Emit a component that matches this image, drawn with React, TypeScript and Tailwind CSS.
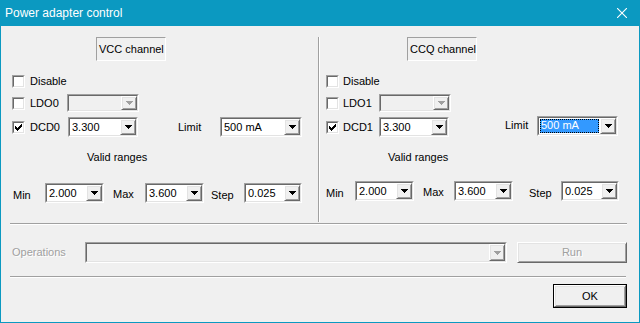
import React from "react";

const sunkenOuter = "border border-t-[#a0a0a0] border-l-[#a0a0a0] border-r-white border-b-white";
const sunkenInner = "border border-t-[#696969] border-l-[#696969] border-r-[#e3e3e3] border-b-[#e3e3e3]";
const raised =
  "border border-t-white border-l-white border-r-[#696969] border-b-[#696969] shadow-[inset_1px_1px_#e3e3e3,inset_-1px_-1px_#a0a0a0]";

function Arrow({ disabled }: { disabled?: boolean }) {
  return (
    <svg width="7" height="4" viewBox="0 0 7 4" shapeRendering="crispEdges">
      <path d="M0 0h7v1H0z M1 1h5v1H1z M2 2h3v1H2z M3 3h1v1H3z" fill={disabled ? "#a0a0a0" : "#000"} />
    </svg>
  );
}

function Combo({
  size,
  value = "",
  disabled = false,
  selected = false,
}: {
  size: string;
  value?: string;
  disabled?: boolean;
  selected?: boolean;
}) {
  return (
    <div className={`flex shrink-0 ${sunkenOuter} ${size}`}>
      <div className={`flex flex-1 ${sunkenInner} ${disabled ? "bg-[#f0f0f0]" : "bg-white"}`}>
        <div className="flex flex-1 items-stretch p-[1px]">
          {selected ? (
            <div className="flex flex-1 items-center bg-[#3399ff] pl-[1px] text-white outline-1 outline-dotted outline-[#000] -outline-offset-1">
              {value}
            </div>
          ) : (
            <div className="flex flex-1 items-center pl-[1px]">{value}</div>
          )}
        </div>
        <div className={`flex w-[16px] items-center justify-center bg-[#f0f0f0] ${raised}`}>
          <Arrow disabled={disabled} />
        </div>
      </div>
    </div>
  );
}

function Check({ checked = false }: { checked?: boolean }) {
  return (
    <div className={`flex h-[13px] w-[13px] shrink-0 ${sunkenOuter}`}>
      <div className={`flex flex-1 items-center justify-center bg-white ${sunkenInner}`}>
        {checked && (
          <svg width="7" height="7" viewBox="0 0 7 7" shapeRendering="crispEdges">
            <path
              d="M6 0h1v1H6z M5 1h2v1H5z M0 2h1v1H0z M4 2h3v1H4z M0 3h2v1H0z M3 3h3v1H3z M0 4h5v1H0z M1 5h3v1H1z M2 6h1v1H2z"
              fill="#000"
            />
          </svg>
        )}
      </div>
    </div>
  );
}

function Channel({ side }: { side: "left" | "right" }) {
  const L = side === "left";
  const n = L ? "0" : "1";
  return (
    <div className={`flex flex-col ${L ? "w-[317px]" : "flex-1"}`}>
      <div
        className={`mt-[11px] flex h-[24px] w-[70px] items-center whitespace-nowrap pl-[2px] ${sunkenOuter} ${L ? "ml-[95px]" : "ml-[87px]"}`}
      >
        {L ? "VCC channel" : "CCQ channel"}
      </div>

      <div className={`mt-[12px] flex h-[17px] items-center ${L ? "pl-[11px]" : "pl-[6px]"}`}>
        <Check />
        <span className={L ? "ml-[5px]" : "ml-[4px]"}>Disable</span>
      </div>

      <div className={`mt-[4px] flex h-[18px] items-center ${L ? "pl-[11px]" : "pl-[6px]"}`}>
        <Check />
        <span className={`${L ? "ml-[5px] w-[37px]" : "ml-[4px] w-[36px]"}`}>LDO{n}</span>
        <Combo size="h-[18px] w-[72px]" disabled />
      </div>

      <div className={`mt-[5px] flex h-[20px] items-center ${L ? "pl-[11px]" : "pl-[6px]"}`}>
        <Check checked />
        <span className={`${L ? "ml-[5px] w-[38px]" : "ml-[4px] w-[36px]"}`}>DCD{n}</span>
        <Combo size="h-[20px] w-[70px]" value="3.300" />
        <span className={`${L ? "ml-[40px] w-[42px]" : "ml-[56px] w-[32px] -mt-[3px]"}`}>Limit</span>
        {L ? (
          <Combo size="h-[20px] w-[82px]" value="500 mA" />
        ) : (
          <div className="-mt-[3px] flex">
            <Combo size="h-[20px] w-[81px]" value="500 mA" selected />
          </div>
        )}
      </div>

      <div className={`mt-[11px] flex h-[18px] items-center ${L ? "pl-[86px]" : "pl-[68px]"}`}>Valid ranges</div>

      <div className={`flex h-[20px] items-center ${L ? "mt-[17px] pl-[12px]" : "mt-[15px] pl-[6px]"}`}>
        <span className={`pt-[5px] ${L ? "w-[32px]" : "w-[29px]"}`}>Min</span>
        <Combo size="h-[20px] w-[59px]" value="2.000" />
        <span className={`ml-[9px] pt-[2px] ${L ? "w-[32px]" : "w-[31px]"}`}>Max</span>
        <Combo size="h-[20px] w-[59px]" value="3.600" />
        <span className={`pt-[4px] ${L ? "ml-[7px] w-[33px]" : "ml-[16px] w-[32px]"}`}>Step</span>
        <Combo size="h-[20px] w-[58px]" value="0.025" />
      </div>
    </div>
  );
}

export default function App() {
  return (
    <div className="flex h-[323px] w-[640px] flex-col border border-t-0 border-[#0b99c1] bg-[#f0f0f0] font-['Liberation_Sans',Arial,sans-serif] text-[11px] text-black">
      {/* title bar */}
      <div className="flex h-[26px] shrink-0 items-center justify-between bg-[#0b99c1] pl-[4px] pr-[12px] text-[12px] text-white">
        <span>Power adapter control</span>
        <svg width="10" height="10" viewBox="0 0 10 10">
          <path d="M0 0L10 10M10 0L0 10" stroke="#fff" strokeWidth="1.1" />
        </svg>
      </div>

      {/* channels */}
      <div className="flex h-[197px] shrink-0">
        <Channel side="left" />
        <div className="mt-[11px] h-[185px] w-[2px] border-l border-r border-l-[#a0a0a0] border-r-white" />
        <Channel side="right" />
      </div>

      <div className="ml-[9px] h-[2px] w-[617px] border-t border-b border-t-[#a0a0a0] border-b-white" />

      {/* operations */}
      <div className="mt-[17px] flex h-[21px] items-center pl-[11px]">
        <span className="w-[73px] text-[#a0a0a0] [text-shadow:1px_1px_#fff]">Operations</span>
        <Combo size="h-[21px] w-[422px]" disabled />
        <div className={`ml-[10px] flex h-[21px] w-[110px] items-center justify-center bg-[#f0f0f0] text-[#a0a0a0] [text-shadow:1px_1px_#fff] ${raised}`}>
          Run
        </div>
      </div>

      <div className="ml-[9px] mt-[13px] h-[2px] w-[616px] border-t border-b border-t-[#a0a0a0] border-b-white" />

      <div className="mt-[6px] flex justify-end pr-[12px]">
        <div className="flex h-[24px] w-[74px] border border-black">
          <div className={`flex flex-1 items-center justify-center bg-[#f0f0f0] ${raised}`}>OK</div>
        </div>
      </div>
    </div>
  );
}
